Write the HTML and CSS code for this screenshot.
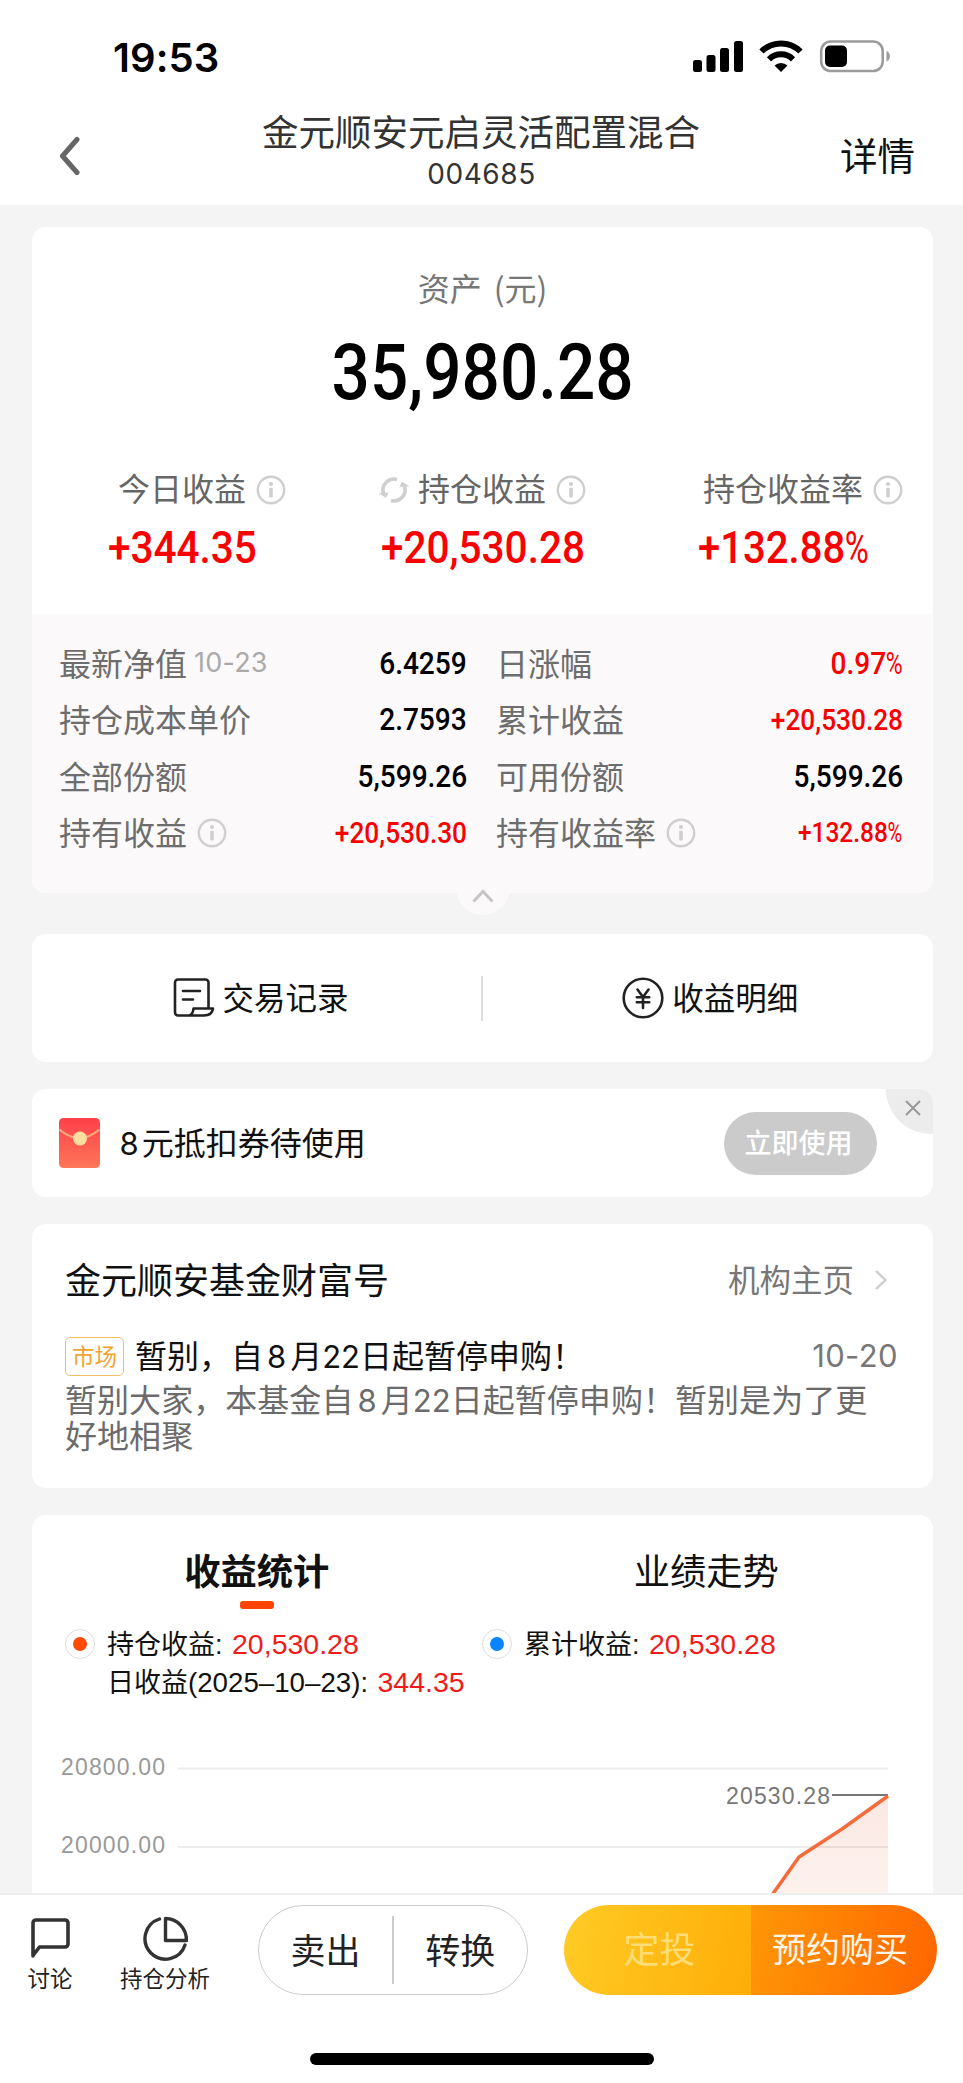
FILE: index.html
```html
<!DOCTYPE html>
<html lang="zh-CN">
<head>
<meta charset="utf-8">
<title>金元顺安元启灵活配置混合</title>
<link rel="stylesheet" href="styles.css">
</head>
<body>
<svg class="defs" width="0" height="0">
  <symbol id="info" viewBox="0 0 30 30">
    <circle cx="15" cy="15" r="13.2" fill="none" stroke="#cfcfcf" stroke-width="2.4"/>
    <circle cx="15" cy="9" r="2.1" fill="#cfcfcf"/>
    <rect x="13.2" y="12.8" width="3.6" height="9.8" rx="1" fill="#cfcfcf"/>
  </symbol>
</svg>
<div class="screen">
  <div class="status">
    <span class="clock">19:53</span>
    <svg class="status-icons" width="200" height="36" viewBox="0 0 200 36">
      <rect x="3" y="21" width="9" height="12" rx="2.5"/>
      <rect x="16.500" y="16" width="9" height="17" rx="2.500"/>
      <rect x="30" y="9" width="9" height="24" rx="2.500"/>
      <rect x="44" y="2" width="9" height="31" rx="2.500"/>
      <g fill="none" stroke="#000" stroke-width="6">
        <path d="M71.500 12.500A27.500 27.500 0 0 1 110.500 12.500"/>
        <path d="M79 20.300A17 17 0 0 1 103 20.300"/>
      </g>
      <path d="M91 33L84.500 26.600A9.500 9.500 0 0 1 97.500 26.600Z"/>
      <rect x="131.200" y="2.500" width="61.500" height="29.500" rx="9.500" fill="none" stroke="#9c9c9c" stroke-width="2.600"/>
      <rect x="135" y="6.500" width="22" height="21.500" rx="5"/>
      <path d="M196.500 12C201 13.500 201 21 196.500 22.500Z" fill="#9c9c9c"/>
    </svg>
  </div>
  <div class="nav">
    <svg class="back" width="24" height="40" viewBox="0 0 24 40"><path d="M20 3.500L5.500 20L20 36.500" fill="none" stroke="#666" stroke-width="5" stroke-linecap="round" stroke-linejoin="round"/></svg>
    <div class="nav-title"><div class="fund-name">金元顺安元启灵活配置混合</div><div class="fund-code">004685</div></div>
    <span class="nav-more">详情</span>
  </div>

  <main class="content">
    <section class="card asset">
      <div class="asset-label">资产<span class="paren">(</span>元<span class="paren-end">)</span></div>
      <div class="asset-total"><span class="num">35,980.28</span></div>
      <div class="metrics">
        <div class="metric m1">
          <div class="metric-label">今日收益<svg class="info"><use href="#info"/></svg></div>
          <div class="metric-value"><span class="num">+344.35</span></div>
        </div>
        <div class="metric m2">
          <div class="metric-label"><svg class="refresh" width="32" height="30" viewBox="0 0 32 30"><g fill="none" stroke="#cfcfcf" stroke-width="3.600"><path d="M5.500 18.500A11 11 0 0 1 19 4.500"/><path d="M26.500 11.500A11 11 0 0 1 13 25.500"/></g><path d="M0.500 18L10.500 17.500L8 23Z M31.500 11.500L21.500 12L24 6.500Z" fill="#cfcfcf"/></svg>持仓收益<svg class="info"><use href="#info"/></svg></div>
          <div class="metric-value"><span class="num">+20,530.28</span></div>
        </div>
        <div class="metric m3">
          <div class="metric-label">持仓收益率<svg class="info"><use href="#info"/></svg></div>
          <div class="metric-value"><span class="num">+132.88<span class="pct">%</span></span></div>
        </div>
      </div>
      <div class="details">
        <div class="row"><span class="key">最新净值<span class="date">10-23</span></span><span class="val">6.4259</span></div>
        <div class="row"><span class="key">日涨幅</span><span class="val red">0.97<span class="pct">%</span></span></div>
        <div class="row"><span class="key">持仓成本单价</span><span class="val">2.7593</span></div>
        <div class="row"><span class="key">累计收益</span><span class="val red mid">+20,530.28</span></div>
        <div class="row"><span class="key">全部份额</span><span class="val">5,599.26</span></div>
        <div class="row"><span class="key">可用份额</span><span class="val">5,599.26</span></div>
        <div class="row"><span class="key">持有收益<svg class="info"><use href="#info"/></svg></span><span class="val red mid">+20,530.30</span></div>
        <div class="row"><span class="key">持有收益率<svg class="info"><use href="#info"/></svg></span><span class="val red small">+132.88<span class="pct">%</span></span></div>
      </div>
      <div class="fold"><svg width="24" height="16" viewBox="0 0 24 16"><path d="M2.500 13.500L12 3.500L21.500 13.500" fill="none" stroke="#c6c4c5" stroke-width="3"/></svg></div>
    </section>

    <section class="card links">
      <div class="link"><svg width="42" height="42" viewBox="0 0 42 42" fill="none" stroke="#222" stroke-width="2.600" stroke-linejoin="round" stroke-linecap="round"><path d="M35.500 31V5.500A3 3 0 0 0 32.500 2.500H5A3 3 0 0 0 2 5.500V35.500A3 3 0 0 0 5 38.500H31Q39 38.500 40 31.500H20.500Q20 37 16.500 38.500"/><path d="M10 14H27M10 22.500H20"/></svg><span>交易记录</span></div>
      <i class="split"></i>
      <div class="link"><svg width="42" height="42" viewBox="0 0 42 42" fill="none" stroke="#222" stroke-width="2.600" stroke-linecap="round"><circle cx="21" cy="21" r="19.300"/><path d="M15.500 12.500L21 20L26.500 12.500M21 20V31M14.800 20.200H27.200M14.800 25.200H27.200"/></svg><span>收益明细</span></div>
    </section>

    <section class="card coupon">
      <svg class="packet" width="41" height="50" viewBox="0 0 41 50">
        <defs><linearGradient id="pk" x1="0" y1="0" x2="0" y2="1"><stop offset="0" stop-color="#fe4048"/><stop offset="1" stop-color="#ff7659"/></linearGradient></defs>
        <rect width="41" height="50" rx="4.500" fill="url(#pk)"/>
        <path d="M0.500 11.500Q20 28.500 40.500 11.500" fill="none" stroke="#fea57c" stroke-width="2"/>
        <circle cx="21" cy="20.500" r="7" fill="#fddda0"/>
      </svg>
      <span class="coupon-text"><span class="n one">8</span>元抵扣券待使用</span>
      <span class="use-btn">立即使用</span>
      <span class="close"><svg width="16" height="16" viewBox="0 0 16 16"><path d="M1 1L15 15M15 1L1 15" stroke="#999" stroke-width="2"/></svg></span>
    </section>

    <section class="card news">
      <div class="news-head"><span class="news-title">金元顺安基金财富号</span><span class="news-home">机构主页<svg width="14" height="22" viewBox="0 0 14 22"><path d="M2 2L11.500 11L2 20" fill="none" stroke="#ccc" stroke-width="2.400"/></svg></span></div>
      <div class="news-line"><span class="tag">市场</span><span class="headline">暂别，自<span class="n one">8</span>月<span class="n">22</span>日起暂停申购！</span><span class="news-date">10-20</span></div>
      <div class="news-body">暂别大家，本基金自<span class="n one">8</span>月<span class="n">22</span>日起暂停申购！暂别是为了更<br>好地相聚</div>
    </section>

    <section class="card stats">
      <div class="tabs"><span class="tab active">收益统计</span><span class="tab">业绩走势</span></div>
      <div class="legend">
        <div class="leg"><span class="ring"><i class="dot orange"></i></span><span>持仓收益<b class="colon">:</b><em>20,530.28</em></span></div>
        <div class="leg"><span class="ring"><i class="dot blue"></i></span><span>累计收益<b class="colon">:</b><em>20,530.28</em></span></div>
        <div class="leg sub"><span>日收益<span class="lat">(2025–10–23)</span><b class="colon">:</b><em>344.35</em></span></div>
      </div>
      <svg class="chart" width="901" height="153" viewBox="32 1740 901 153">
        <defs><linearGradient id="area" x1="0" y1="0" x2="0" y2="1"><stop offset="0" stop-color="#fbe8e2"/><stop offset="1" stop-color="#fdf2ee"/></linearGradient></defs>
        <path d="M888 1796L842 1829L799 1857L772 1895H888Z" fill="url(#area)"/>
        <path d="M178 1768.500H888M178 1847H888" stroke="#000" stroke-opacity=".075" stroke-width="2"/>
        <path d="M832 1795H888" stroke="#777" stroke-width="2"/>
        <path d="M888 1796L842 1829L799 1857L772 1895" fill="none" stroke="#f46b3c" stroke-width="3.500" stroke-linejoin="round"/>
        <text class="axis" x="61" y="1775" textLength="104">20800.00</text>
        <text class="axis" x="61" y="1853" textLength="104">20000.00</text>
        <text class="axis peak" x="726" y="1803.500" textLength="104">20530.28</text>
      </svg>
    </section>
  </main>

  <footer class="bar">
    <div class="actions">
      <div class="act talk"><svg width="44" height="46" viewBox="0 0 44 46"><path d="M5 40V7A3 3 0 0 1 8 4H37A3 3 0 0 1 40 7V28A3 3 0 0 1 37 31H11.500L5 39.500Z" fill="none" stroke="#333" stroke-width="3.600" stroke-linejoin="round"/></svg>讨论</div>
      <div class="act pie"><svg width="46" height="46" viewBox="0 0 46 46" fill="none" stroke="#333" stroke-width="3.400" stroke-linecap="round" stroke-linejoin="round"><path d="M17.500 3A20.500 20.500 0 1 0 43 29"/><path d="M23.500 2.500V24.500H44.500A21 22 0 0 0 23.500 2.500Z"/></svg>持仓分析</div>
      <div class="pill"><span>卖出</span><i></i><span>转换</span></div>
      <div class="buy"><span class="plan">定投</span><span class="order">预约购买</span></div>
    </div>
    <div class="home"></div>
  </footer>
</div>
</body>
</html>
```
FILE: styles.css
```css
* { box-sizing: border-box; }
body { margin: 0; background: #f4f4f4; font-family: "Noto Sans CJK SC", sans-serif; font-size: 32px; color: #111; white-space: nowrap; }
svg { display: block; flex: none; }
i, em { font-style: normal; }
.defs { position: absolute; }
.screen { width: 963px; height: 2083px; display: flex; flex-direction: column; overflow: hidden; }

.status { height: 100px; background: #fff; display: flex; justify-content: space-between; padding: 37px 73px 0 113px; }
.clock { font: 600 40px/42px Inter, sans-serif; color: #000; letter-spacing: .1px; }
.status-icons { margin-top: 2px; }
.nav { height: 105px; background: #fff; display: grid; grid-template-columns: 200px 1fr 200px; }
.back { margin: 36px 0 0 57px; }
.nav-title { text-align: center; color: #333; }
.fund-name { font-size: 36.5px; line-height: 40px; margin: 11px 1px 0 0; }
.fund-code { font: 28px/30px Inter, sans-serif; margin-top: 8px; letter-spacing: .6px; }
.nav-more { font-size: 37.5px; line-height: 44px; margin-top: 32px; padding-right: 48px; text-align: right; color: #111; }

.content { flex: 1; min-height: 0; padding: 22px 30px 0 32px; }
.card { background: #fff; border-radius: 14px; }
.info { width: 30px; height: 30px; }
.num, .val { font-family: Roboto, sans-serif; font-weight: 500; display: inline-block; }
.pct { font-weight: 400; display: inline-block; transform: scaleX(.82); transform-origin: left; margin-right: -.13em; }

.asset { height: 666px; position: relative; display: flex; flex-direction: column; }
.asset-label { text-align: center; font-size: 32px; line-height: 40px; color: #777; margin-top: 40px; }
.paren { margin-left: 12px; }
.asset-total { text-align: center; font-size: 77.5px; line-height: 80px; margin-top: 18px; color: #000; }
.asset-total .num { transform: scaleX(.87); }
.metrics { display: flex; height: 147px; margin-top: 54px; }
.metric { display: flex; flex-direction: column; flex: none; }
.m1 { width: 260px; padding-left: 86px; }
.m2 { width: 318px; padding-left: 89px; }
.m3 { padding-left: 93px; }
.metric-label { display: flex; align-items: center; line-height: 40px; color: #666; }
.metric-label .info { margin: 5px 0 0 10px; }
.metric-label .refresh { margin: 5px 8px 0 -3px; }
.metric-value { font-size: 45px; line-height: 50px; color: #f90001; margin-top: 12px; }
.metric-value .num { transform: scaleX(.9); transform-origin: left; }
.m1 .metric-value { margin-left: -10px; }
.m3 .metric-value { margin-left: -5px; }
.m3 .num { transform: scaleX(.89); }
.details { flex: 1; background: #fbf9fa; border-radius: 0 0 14px 14px; padding: 21px 28px 0 27px; display: grid; grid-template-columns: 408px 407px; column-gap: 29px; grid-auto-rows: 56.5px; }
.row { display: flex; justify-content: space-between; align-items: center; line-height: 44px; }
.key { display: flex; align-items: center; color: #6d6d6d; padding-bottom: 3px; }
.key .info { margin: 4px 0 0 10px; }
.date { font: 27px/40px Inter, sans-serif; color: #aaa; margin: 3px 0 0 7px; letter-spacing: .2px; }
.val { font-size: 31px; color: #000; transform: scaleX(.905); transform-origin: right; padding-top: 1px; }
.red { color: #f90001; }
.mid { font-size: 29px; }
.small { font-size: 27px; padding-top: 0; }
.fold { position: absolute; left: 424px; bottom: -22px; width: 54px; height: 27px; border-radius: 0 0 27px 27px; background: #fbf9fa; display: flex; justify-content: center; }

.links { height: 128px; margin-top: 41px; display: flex; align-items: center; padding-left: 1px; }
.link { flex: 1; display: flex; align-items: center; justify-content: center; gap: 8px; font-size: 31.5px; line-height: 40px; color: #111; padding-left: 5px; }
.link span { padding-bottom: 4px; }
.split { width: 1.5px; height: 45px; background: #ddd; margin-left: -2px; }

.coupon { height: 108px; margin-top: 27px; position: relative; display: flex; align-items: center; padding: 0 56px 0 26.5px; overflow: hidden; }
.coupon-text { margin-left: 17px; line-height: 40px; padding-bottom: 5px; }
.n { font-family: Inter, sans-serif; font-size: 31px; line-height: 0; }
.one { padding: 0 4px; }
.coupon .one { padding: 0 3px; }
.use-btn { margin-left: auto; width: 153px; height: 63px; border-radius: 32px; background: #cbcbcb; color: #fff; font-size: 27px; font-weight: 500; line-height: 59px; text-align: center; padding-right: 4px; }
.close { position: absolute; right: 0; top: 0; width: 47px; height: 45px; background: #ececec; border-bottom-left-radius: 45px; padding: 11px 0 0 19px; }

.news { height: 264px; margin-top: 27px; padding: 31px 34px 0 33px; }
.news-head { display: flex; justify-content: space-between; align-items: center; line-height: 46px; }
.news-title { font-size: 36px; }
.news-home { display: flex; align-items: center; color: #777; font-size: 31.5px; margin-right: 11px; }
.news-home svg { margin: 3px 0 0 20px; }
.news-line { display: flex; align-items: center; height: 40px; margin-top: 35px; }
.tag { width: 59px; height: 39px; border: 1.5px solid #f3bd6a; border-radius: 5px; color: #f0a431; font-size: 22.5px; line-height: 35px; text-align: center; }
.headline { margin-left: 11px; line-height: 40px; padding-bottom: 5px; }
.news-date { margin-left: auto; font: 31px/40px Inter, sans-serif; color: #777; letter-spacing: .4px; margin-right: 1px; }
.news-body { color: #6b6b6b; line-height: 36px; margin-top: 4px; letter-spacing: .05px; }

.stats { height: 400px; margin-top: 27px; }
.tabs { display: flex; padding: 31px 2px 0 0; height: 95px; }
.tab { flex: 1; text-align: center; font-size: 36.3px; line-height: 46px; }
.active { font-weight: 700; }
.active::after { content: ""; display: block; width: 34px; height: 8px; border-radius: 3px; background: #ff4400; margin: 9px auto 0; }
.legend { display: grid; grid-template-columns: 417px 1fr; padding: 15px 0 0 33px; grid-auto-rows: 38px; }
.leg { display: flex; align-items: center; font-size: 27px; line-height: 38px; color: #111; }
.ring { width: 30px; height: 30px; border: 1.5px solid #ddd; border-radius: 50%; display: flex; align-items: center; justify-content: center; margin-right: 12px; }
.dot { width: 14px; height: 14px; border-radius: 50%; }
.orange { background: #ff4a00; }
.blue { background: #0a84ff; }
.colon { font-family: "Liberation Sans", sans-serif; font-weight: 400; }
.leg em { font-family: "Liberation Sans", sans-serif; font-size: 28.5px; color: #f01c1c; margin-left: 9.5px; }
.lat { font-family: "Liberation Sans", sans-serif; font-size: 27.7px; }
.sub { padding-left: 42px; }
.chart { margin-top: 39px; }
.axis { font: 23px "Liberation Sans", sans-serif; fill: #999; }
.peak { fill: #777; }

.bar { height: 190px; flex: none; background: #fff; border-top: 2px solid #eee; display: flex; flex-direction: column; position: relative; }
.actions { display: flex; padding-top: 10px; height: 158px; }
.act { display: flex; flex-direction: column; align-items: center; font-size: 22.5px; line-height: 28px; color: #222; padding-top: 11px; flex: none; }
.talk { width: 46px; margin-left: 27px; }
.pie { width: 92px; margin-left: 46px; }
.act svg { margin-bottom: 1px; }
.pill { width: 270px; height: 90px; margin-left: 47px; border: 1.5px solid #ccc; border-radius: 45px; display: flex; align-items: center; font-size: 35px; line-height: 83px; color: #222; flex: none; }
.pill span { flex: 1; text-align: center; height: 86px; }
.pill i { width: 1.5px; height: 68px; background: #ccc; }
.buy { width: 373px; height: 90px; margin-left: 36px; border-radius: 45px; overflow: hidden; display: flex; line-height: 85px; text-align: center; flex: none; }
.plan { width: 187px; background: linear-gradient(100deg, #ffcb25, #ffad07); color: #ffdd76; font-size: 36px; padding-left: 4px; }
.order { flex: 1; background: linear-gradient(100deg, #ff9706, #ff6500); color: #fff6e8; font-size: 34px; padding-right: 8px; }
.home { width: 344px; height: 12px; border-radius: 6px; background: #000; margin-left: 310px; }
```
